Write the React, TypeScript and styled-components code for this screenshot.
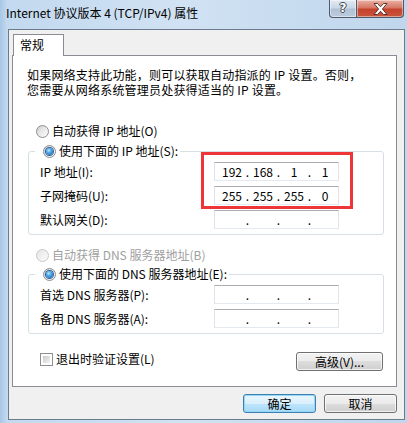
import styled, { createGlobalStyle } from 'styled-components'

const GlobalStyle = createGlobalStyle`
  html, body {
    margin: 0;
    padding: 0;
  }
  body {
    background: #bcd4ec;
    font-family: "Noto Sans CJK SC", "Microsoft YaHei", sans-serif;
    font-size: 12px;
    color: #000;
  }
`

const Window = styled.div`
  width: 407px;
  height: 423px;
  box-sizing: border-box;
  display: flex;
  flex-direction: column;
  overflow: hidden;
  background: linear-gradient(90deg, #a7c6e6 0, #c3d9ef 7px, #d0e2f3 45%, #c0d6ec 100%);
`

const TitleBar = styled.div`
  height: 29px;
  display: flex;
  align-items: flex-start;
  flex-shrink: 0;
`

const Title = styled.div`
  padding: 5px 0 0 6px;
  line-height: 16px;
  font-size: 12px;
  white-space: nowrap;
`

const CaptionButtons = styled.div`
  margin-left: auto;
  margin-right: 3px;
  display: flex;
`

const CaptionButton = styled.div<{ $close?: boolean }>`
  height: 18px;
  width: ${p => (p.$close ? '47px' : '28px')};
  box-sizing: border-box;
  display: flex;
  align-items: center;
  justify-content: center;
  border: 1px solid #4d5a6b;
  border-top: none;
  border-left: ${p => (p.$close ? 'none' : '1px solid #4d5a6b')};
  border-radius: ${p => (p.$close ? '0 0 4px 0' : '0 0 0 4px')};
  background: ${p =>
    p.$close
      ? 'linear-gradient(180deg, #eab2a5 0%, #d77866 45%, #c5432e 55%, #c9553c 100%)'
      : 'linear-gradient(180deg, #e3ebf4 0%, #cad7e5 45%, #b1c2d5 55%, #bccbdc 100%)'};
  box-shadow: inset 0 0 0 1px rgba(255, 255, 255, 0.45);
`

const HelpGlyph = styled.span`
  font-family: "DejaVu Sans", sans-serif;
  font-weight: bold;
  font-size: 12px;
  line-height: 13px;
  color: #fff;
  text-shadow: -1px 0 #3c4654, 1px 0 #3c4654, 0 -1px #3c4654, 0 1px #3c4654;
`

const Client = styled.div`
  flex: 1;
  margin: 0 2px 3px 8px;
  border: 1px solid #6a7b8e;
  background: #f0f0f0;
  padding: 4px 7px 0 3px;
  display: flex;
  flex-direction: column;
`

const TabStrip = styled.div`
  display: flex;
  padding-left: 1px;
`

const Tab = styled.div`
  position: relative;
  z-index: 1;
  width: 51px;
  height: 22px;
  box-sizing: border-box;
  margin-bottom: -1px;
  padding-left: 6px;
  line-height: 20px;
  background: #fff;
  border: 1px solid #898c95;
  border-bottom: none;
`

const TabPanel = styled.div`
  height: 332px;
  box-sizing: border-box;
  background: #fff;
  border: 1px solid #898c95;
  padding: 11px 12px 0 15px;
  display: flex;
  flex-direction: column;
`

const Intro = styled.p`
  margin: 0 0 0 -1px;
  line-height: 15px;
  white-space: nowrap;
  letter-spacing: 0.2px;
`

const RadioRow = styled.label<{ $disabled?: boolean; $top?: number }>`
  display: flex;
  align-items: center;
  gap: 3px;
  height: 16px;
  line-height: 16px;
  margin-top: ${p => p.$top ?? 0}px;
  padding-left: 8px;
  color: ${p => (p.$disabled ? '#a0a0a0' : '#000')};
  white-space: nowrap;
`

const Radio = styled.span<{ $checked?: boolean; $disabled?: boolean }>`
  width: 13px;
  height: 13px;
  box-sizing: border-box;
  border-radius: 50%;
  display: flex;
  align-items: center;
  justify-content: center;
  border: 1px solid ${p => (p.$disabled ? '#c8c8c8' : '#8b8d90')};
  background: ${p =>
    p.$disabled
      ? 'linear-gradient(135deg, #e6e6e6, #fafafa)'
      : 'linear-gradient(135deg, #cfcfcf 0%, #ececec 55%, #fdfdfd 100%)'};

  &::after {
    content: '';
    width: 7px;
    height: 7px;
    border-radius: 50%;
    display: ${p => (p.$checked ? 'block' : 'none')};
    background: radial-gradient(circle at 40% 35%, #bfe8ff 0, #49a3e6 40%, #17599c 100%);
    box-shadow: 0 0 0 1px #29609a;
  }
`

const GroupBox = styled.fieldset<{ $top: number }>`
  margin: ${p => p.$top}px 0 0;
  padding: 3px 10px 5px 11px;
  border: 1px solid #d5dfe5;
  border-radius: 3px;
  min-width: 0;
`

const GroupLegend = styled.legend`
  padding: 0 2px 0 0;
  margin-left: -5px;
  background: #fff;
`

const Rows = styled.div`
  position: relative;
  display: flex;
  flex-direction: column;
  gap: 5px;
`

const Row = styled.div`
  display: flex;
  align-items: center;
  height: 19px;
`

const RowLabel = styled.span`
  width: 174px;
  white-space: nowrap;
`

const IpBox = styled.div`
  width: 125px;
  height: 19px;
  box-sizing: border-box;
  display: flex;
  align-items: center;
  padding-left: 5px;
  border: 1px solid #e2e3ea;
  border-top-color: #abadb3;
  border-bottom-color: #e3e9ef;
  background: #fff;
  font-size: 12px;
`

const Octet = styled.span`
  width: 24px;
  text-align: center;
`

const Dot = styled.span`
  width: 7px;
  text-align: center;
`

const Highlight = styled.div`
  position: absolute;
  left: 161px;
  top: -10px;
  width: 152px;
  height: 57px;
  box-sizing: border-box;
  border: 3px solid #ee3538;
  pointer-events: none;
`

const BottomRow = styled.div`
  display: flex;
  justify-content: space-between;
  align-items: flex-start;
  margin-top: 15px;
  padding: 0 1px 0 12px;
`

const CheckRow = styled.label`
  display: flex;
  align-items: center;
  gap: 3px;
  height: 16px;
  line-height: 16px;
  margin-top: 2px;
  white-space: nowrap;
`

const CheckBox = styled.span`
  width: 13px;
  height: 13px;
  box-sizing: border-box;
  border: 1px solid #8e8f8f;
  background: #fff;
  padding: 2px;
  display: flex;

  &::after {
    content: '';
    flex: 1;
    background: linear-gradient(135deg, #cbcbcb, #f3f3f3);
  }
`

const Button = styled.button<{ $default?: boolean; $width: number; $top?: number }>`
  width: ${p => p.$width}px;
  height: 19px;
  margin-top: ${p => p.$top ?? 0}px;
  padding: 0;
  font-family: inherit;
  font-size: 12px;
  line-height: 16px;
  color: #000;
  border-radius: 3px;
  border: 1px solid ${p => (p.$default ? '#3c7fb1' : '#707070')};
  background: ${p =>
    p.$default
      ? 'linear-gradient(180deg, #eaf6fd 0%, #d9f0fc 50%, #bee6fd 50%, #a7d9f5 100%)'
      : 'linear-gradient(180deg, #f2f2f2 0%, #ebebeb 50%, #dddddd 50%, #cfcfcf 100%)'};
  box-shadow: inset 0 0 0 1px ${p => (p.$default ? '#97d7f3' : 'rgba(255,255,255,0.7)')};
`

const Footer = styled.div`
  display: flex;
  justify-content: flex-end;
  gap: 8px;
  padding-top: 7px;
`

function IpField({ value }: { value?: string[] }) {
  const parts = value ?? ['', '', '', '']
  return (
    <IpBox>
      {parts.map((p, i) => (
        <span key={i} style={{ display: 'contents' }}>
          <Octet>{p}</Octet>
          {i < 3 && <Dot>.</Dot>}
        </span>
      ))}
    </IpBox>
  )
}

function App() {
  return (
    <>
      <GlobalStyle />
      <Window>
        <TitleBar>
          <Title>Internet 协议版本 4 (TCP/IPv4) 属性</Title>
          <CaptionButtons>
            <CaptionButton>
              <HelpGlyph>?</HelpGlyph>
            </CaptionButton>
            <CaptionButton $close>
              <svg width="15" height="12" viewBox="0 0 15 12">
                <path
                  d="M1 0.5h3.5L7.5 3.8 10.5 0.5H14L9.4 6 14 11.5H10.5L7.5 8.2 4.5 11.5H1L5.6 6z"
                  fill="#fff"
                  stroke="#4a2a26"
                  strokeWidth="0.9"
                />
              </svg>
            </CaptionButton>
          </CaptionButtons>
        </TitleBar>

        <Client>
          <TabStrip>
            <Tab>常规</Tab>
          </TabStrip>
          <TabPanel>
            <Intro>
              如果网络支持此功能，则可以获取自动指派的 IP 设置。否则，
              <br />
              您需要从网络系统管理员处获得适当的 IP 设置。
            </Intro>

            <RadioRow $top={26}>
              <Radio />
              自动获得 IP 地址(O)
            </RadioRow>

            <GroupBox $top={4}>
              <GroupLegend>
                <RadioRow>
                  <Radio $checked />
                  使用下面的 IP 地址(S):
                </RadioRow>
              </GroupLegend>
              <Rows>
                <Row>
                  <RowLabel>IP 地址(I):</RowLabel>
                  <IpField value={['192', '168', '1', '1']} />
                </Row>
                <Row>
                  <RowLabel>子网掩码(U):</RowLabel>
                  <IpField value={['255', '255', '255', '0']} />
                </Row>
                <Row>
                  <RowLabel>默认网关(D):</RowLabel>
                  <IpField />
                </Row>
                <Highlight />
              </Rows>
            </GroupBox>

            <RadioRow $top={12} $disabled>
              <Radio $disabled />
              自动获得 DNS 服务器地址(B)
            </RadioRow>

            <GroupBox $top={3}>
              <GroupLegend>
                <RadioRow>
                  <Radio $checked />
                  使用下面的 DNS 服务器地址(E):
                </RadioRow>
              </GroupLegend>
              <Rows>
                <Row>
                  <RowLabel>首选 DNS 服务器(P):</RowLabel>
                  <IpField />
                </Row>
                <Row>
                  <RowLabel>备用 DNS 服务器(A):</RowLabel>
                  <IpField />
                </Row>
              </Rows>
            </GroupBox>

            <BottomRow>
              <CheckRow>
                <CheckBox />
                退出时验证设置(L)
              </CheckRow>
              <Button $width={87} $top={3}>
                高级(V)...
              </Button>
            </BottomRow>
          </TabPanel>

          <Footer>
            <Button $default $width={73}>
              确定
            </Button>
            <Button $width={73}>取消</Button>
          </Footer>
        </Client>
      </Window>
    </>
  )
}

export default App
